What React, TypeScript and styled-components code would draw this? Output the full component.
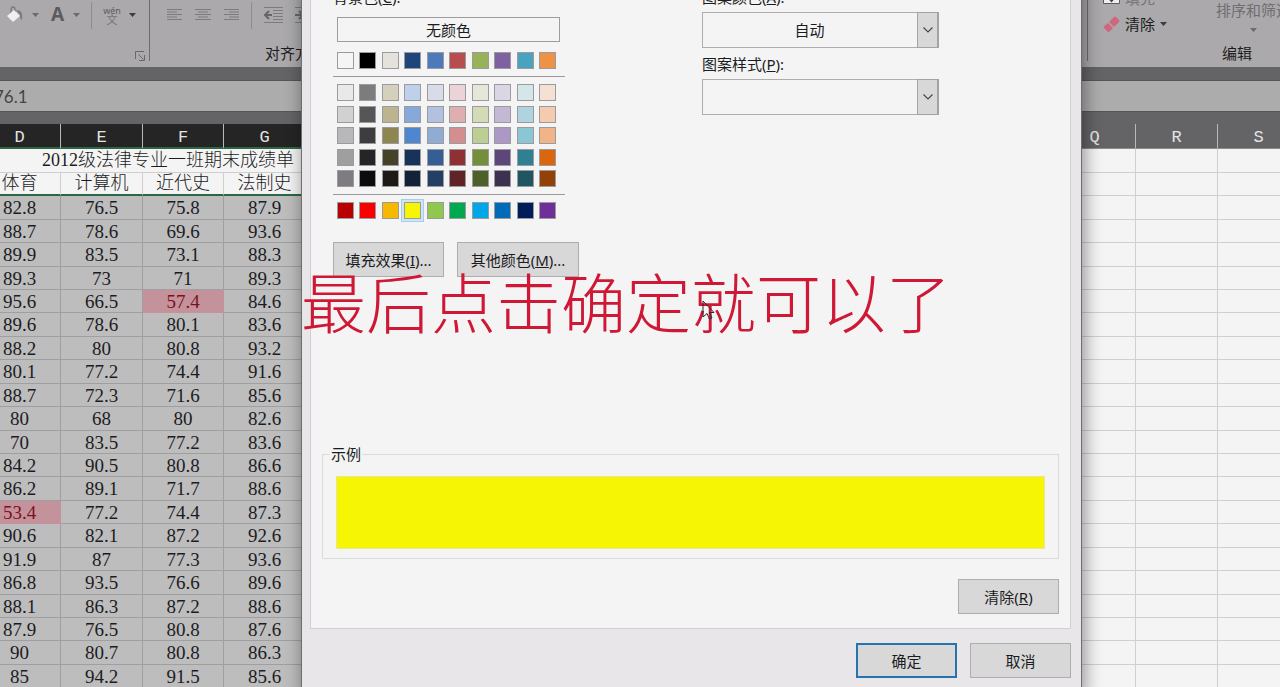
import React from "react";
import styled, { createGlobalStyle, css } from "styled-components";

const GlobalStyle = createGlobalStyle`
  * { box-sizing: border-box; }
  html, body { margin: 0; height: 100%; overflow: hidden; }
  body {
    background: #f4f4f4;
    color: #1c1c1e;
    font: 15px/20px "Noto Sans", "Noto Sans CJK SC", sans-serif;
  }
  button, select, input { font: inherit; color: inherit; margin: 0; }
`;

const Window = styled.main`
  position: relative;
  height: 100vh;
  overflow: hidden;
`;

/* Ribbon */
const Ribbon = styled.header`
  display: flex;
  height: 67px;
  background: #aba9ab;
`;
const RibbonGroup = styled.section<{ $width?: number; $edge?: "left" | "right" }>`
  display: flex;
  flex-direction: column;
  justify-content: space-between;
  flex: none;
  height: 61px;
  width: ${(p) => (p.$width ? `${p.$width}px` : "auto")};
  ${(p) => p.$edge && css`border-${p.$edge}: 1px solid #6d6c6e;`}
`;
const ToolRow = styled.div<{ $start: number; $gap: number }>`
  display: flex;
  align-items: center;
  height: 30px;
  padding-left: ${(p) => p.$start}px;
  gap: ${(p) => p.$gap}px;
`;
const ToolButton = styled.button`
  display: flex;
  align-items: center;
  flex: none;
  padding: 0;
  border: 0;
  background: none;
  gap: 8px;
  color: #5c5b5d;
  white-space: nowrap;
`;
const FontLetter = styled.span`
  width: 15px;
  padding-bottom: 3px;
  font: bold 19px/20px "Noto Sans", sans-serif;
`;
const Phonetic = styled.span`
  display: flex;
  flex-direction: column;
  align-items: center;
  width: 18px;
  font-size: 9px;
  line-height: 9px;
`;
const PhoneticBase = styled.span`
  font-size: 11px;
  line-height: 10px;
  color: #747375;
`;
const Divider = styled.span`
  width: 1px;
  height: 27px;
  background: #8d8c8e;
`;
const Launcher = styled(ToolButton)`
  align-self: flex-end;
  margin-right: 4px;
`;
const GroupLabel = styled.span<{ $start: number }>`
  padding-left: ${(p) => p.$start}px;
  line-height: 16px;
  white-space: nowrap;
`;
const Spacer = styled.div`
  flex: 1;
`;
const EditArea = styled.div`
  display: flex;
  justify-content: space-between;
  margin-right: -11px;
`;
const EditTools = styled.div`
  display: flex;
  flex-direction: column;
  gap: 6px;
  margin-top: -12px;
  padding-left: 15px;
`;
const EditButton = styled(ToolButton)<{ $dim?: boolean }>`
  color: ${(p) => (p.$dim ? "#777678" : "#1c1c1e")};
  gap: 5px;
  height: 20px;
`;
const SortButton = styled(ToolButton)`
  flex-direction: column;
  color: #6f6e70;
`;

/* Formula bar */
const FormulaRow = styled.div`
  padding: 13px 0 12px;
  background: #646366;
`;
const FormulaInput = styled.input`
  display: block;
  width: calc(100% + 6px);
  height: 32px;
  margin-left: -6px;
  padding: 0;
  border: solid #555457;
  border-width: 1px 0;
  background: #adacad;
  color: #454446;
  font: 17px/20px Lato, sans-serif;
`;

/* Sheet */
const Sheet = styled.table`
  width: calc(100% + 41px);
  margin-left: -21px;
  table-layout: fixed;
  border-collapse: separate;
  border-spacing: 0;
  font: 300 18px/20px "Liberation Serif", "Noto Sans CJK SC", serif;
`;
const Col = styled.col<{ $width?: number }>`
  width: ${(p) => (p.$width ? `${p.$width}px` : "auto")};
`;
const Letter = styled.th<{ $active?: boolean }>`
  height: 25px;
  padding: 4px 0 0;
  border-right: 1px solid #b9b8ba;
  border-bottom: ${(p) => (p.$active ? "2px solid #2c6645" : "1px solid #8b8a8c")};
  background: ${(p) => (p.$active ? "#252526" : "#646366")};
  color: #e4e3e5;
  font: 17px/18px "Liberation Mono", monospace;
`;
const Row = styled.tr`
  height: 23px;
  &:nth-child(7n + 1),
  &:nth-child(7n + 3),
  &:nth-child(7n + 5) {
    height: 24px;
  }
`;
const Cell = styled.td<{ $kind?: "head" | "score" | "low" }>`
  padding: 0;
  line-height: 21px;
  text-align: center;
  white-space: nowrap;
  border: solid #cfcfd0;
  border-width: 0 1px 1px 0;
  ${(p) => p.$kind === "head" && css`border-bottom: 2px solid #2c6645;`}
  ${(p) => (p.$kind === "score" || p.$kind === "low") && css`font-size: 19px;`}
  ${(p) => p.$kind === "score" && css`background: #bebdbe; border-color: #9f9ea0;`}
  ${(p) => p.$kind === "low" && css`background: #c4929a; border-color: #c4929a; color: #7d1020;`}
`;
const TitleCell = styled(Cell)`
  text-align: right;
  padding-right: 11px;
`;

/* Dialog */
const Dialog = styled.section`
  position: absolute;
  top: -14px;
  bottom: -8px;
  left: 302px;
  right: 199px;
  padding: 0 10px 0 8px;
  background: #e8e6e9;
  box-shadow: 0 0 0 1px #6e6d70, 2px 0 16px 2px rgba(0, 0, 0, 0.4);
`;
const Panel = styled.div`
  height: 643px;
  padding: 0 11px 14px;
  display: flex;
  flex-direction: column;
  border: 1px solid #d2d0d4;
  background: #f4f4f4;
`;
const Columns = styled.div`
  display: flex;
  justify-content: space-between;
`;
const ColorColumn = styled.div`
  padding-left: 11px;
`;
const PatternColumn = styled.div`
  width: 237px;
  margin-right: 120px;
`;
const Label = styled.label`
  display: block;
  line-height: 20px;
`;
const ColorLabel = styled.span`
  display: block;
  line-height: 20px;
`;
const NoColor = styled.button`
  display: block;
  width: 223px;
  height: 25px;
  margin: 10px 4px;
  padding: 0;
  border: 1px solid #9d9ca0;
  background: #f4f4f4;
  line-height: 20px;
`;
const Swatches = styled.div<{ $rows: number }>`
  display: grid;
  grid-template-columns: repeat(10, 17px);
  justify-content: space-between;
  align-content: space-between;
  width: 219px;
  height: ${(p) => (p.$rows > 1 ? 103 : 17)}px;
  margin-left: 4px;
`;
const Swatch = styled.button<{ $color: string; $selected?: boolean }>`
  width: 17px;
  height: 17px;
  padding: 0;
  border: 1px solid #9b9a9c;
  background: ${(p) => p.$color};
  ${(p) => p.$selected && css`box-shadow: 0 0 0 2px #cfe4f5, 0 0 0 3px #a5cdec;`}
`;
const Rule = styled.hr`
  width: 232px;
  height: 1px;
  margin: 7px 0;
  border: 0;
  background: #9b999d;
`;
const PushButton = styled.button<{ $width: number; $primary?: boolean }>`
  flex: none;
  width: ${(p) => p.$width}px;
  height: 35px;
  padding: 0;
  border: ${(p) => (p.$primary ? "2px solid #2673ae" : "1px solid #adacae")};
  background: #d9d8d9;
  white-space: nowrap;
`;
const FillButtons = styled.div`
  display: flex;
  gap: 13px;
  margin-top: 23px;
`;
const Combo = styled.div`
  position: relative;
  height: 36px;
  margin: 5px 0 6px;
`;
const Select = styled.select`
  width: 100%;
  height: 100%;
  padding: 0 22px 0 0;
  border: 1px solid #adacae;
  border-radius: 0;
  background: #f4f4f4;
  appearance: none;
  text-align: center;
  text-align-last: center;
`;
const ComboArrow = styled.span`
  position: absolute;
  top: 0;
  right: 0;
  bottom: 0;
  display: flex;
  align-items: center;
  justify-content: center;
  width: 22px;
  border: 1px solid #a3a2a4;
  border-right-width: 2px;
  background: #d9d8d9;
  pointer-events: none;
`;
const Sample = styled.fieldset`
  height: 115px;
  margin: auto 0 20px;
  padding: 12px 13px 10px;
  border: 1px solid #dad9db;
`;
const Legend = styled.legend`
  margin-left: -6px;
  padding: 0 1px;
  line-height: 20px;
`;
const SampleFill = styled.div`
  height: 73px;
  background: #f6f504;
  border: 1px solid #e9e890;
`;
const Actions = styled.div<{ $top?: number }>`
  display: flex;
  justify-content: flex-end;
  gap: 13px;
  margin-top: ${(p) => p.$top || 0}px;
`;

/* Overlays */
const Caption = styled.p`
  position: absolute;
  top: 262px;
  left: 301px;
  margin: 0;
  color: #cf1835;
  font: 300 65px/76px "Noto Sans CJK SC", sans-serif;
  white-space: nowrap;
  pointer-events: none;
`;
const Pointer = styled.svg`
  position: absolute;
  top: 300px;
  left: 702px;
`;

const Caret = ({ dark }: { dark?: boolean }) => (
  <svg width="7" height="4" viewBox="0 0 7 4" aria-hidden="true">
    <path d="M0 0h7L3.500 4z" fill={dark ? "#3c3b3d" : "#6b6a6c"} />
  </svg>
);
const Bucket = () => (
  <svg width="18" height="18" viewBox="0 0 18 18" aria-hidden="true">
    <path d="M5 8V4c0-4 4-4 4 0v4" fill="none" stroke="#7b7a7c" strokeWidth="1.300" />
    <path d="M10 4c5 0 7 3 6 10-2-1-2-3-2-5z" fill="#7b7a7c" />
    <path d="M1 10 8 4l6 6-7 6z" fill="#f0eff0" />
  </svg>
);
const Lines = ({ rows }: { rows: [number, number][] }) => (
  <svg width="16" height="12" viewBox="0 0 16 12" aria-hidden="true">
    {rows.map(([x, w], i) => (
      <rect key={i} x={x} y={i * 2.5} width={w} height="1" fill="#7c7b7d" />
    ))}
  </svg>
);
const Indent = ({ right }: { right?: boolean }) => (
  <svg width="19" height="18" viewBox="0 0 19 18" aria-hidden="true">
    <path d="M0 1.500h19M9 4.500h10M9 7.500h10M9 10.500h10M9 13.500h10M0 16.500h19" stroke="#7c7b7d" />
    <path
      d={right ? "M0 9h7M4 5l4 4-4 4" : "M8 9H1M5 5 1 9l4 4"}
      fill="none"
      stroke="#666567"
      strokeWidth="2"
    />
  </svg>
);
const Eraser = () => (
  <svg width="17" height="17" viewBox="0 0 17 17" aria-hidden="true">
    <path d="M6 6 11 1q1-1 2 0l3 3q1 1 0 2l-5 5z" fill="#cf667f" />
    <path d="M5 7l5 5-3.500 3.500q-1 1-2 0L1 12q-1-1 0-2z" fill="#cf667f" />
  </svg>
);
const FillIcon = () => (
  <svg width="17" height="17" viewBox="0 0 17 17" aria-hidden="true">
    <path d="M.5.5h16v13H.5z" fill="#f0eff0" stroke="#5c5b5d" />
    <path d="M8.500 3v7M5 7l3.500 4L12 7" fill="none" stroke="#444" strokeWidth="2" />
  </svg>
);
const Chevron = () => (
  <svg width="10" height="6" viewBox="0 0 10 6" aria-hidden="true">
    <path d="M.5.500 5 5 9.500.500" fill="none" stroke="#4a494b" strokeWidth="1.200" />
  </svg>
);

const alignments: { name: string; rows: [number, number][] }[] = [
  { name: "左对齐", rows: [[0, 15], [0, 10], [0, 15], [0, 10], [0, 15]] },
  { name: "居中", rows: [[0, 16], [3, 10], [0, 16], [3, 10], [0, 16]] },
  { name: "右对齐", rows: [[1, 15], [6, 10], [1, 15], [6, 10], [1, 15]] },
];

const scores = [
  ["82.8", "76.5", "75.8", "87.9"],
  ["88.7", "78.6", "69.6", "93.6"],
  ["89.9", "83.5", "73.1", "88.3"],
  ["89.3", "73", "71", "89.3"],
  ["95.6", "66.5", "57.4", "84.6"],
  ["89.6", "78.6", "80.1", "83.6"],
  ["88.2", "80", "80.8", "93.2"],
  ["80.1", "77.2", "74.4", "91.6"],
  ["88.7", "72.3", "71.6", "85.6"],
  ["80", "68", "80", "82.6"],
  ["70", "83.5", "77.2", "83.6"],
  ["84.2", "90.5", "80.8", "86.6"],
  ["86.2", "89.1", "71.7", "88.6"],
  ["53.4", "77.2", "74.4", "87.3"],
  ["90.6", "82.1", "87.2", "92.6"],
  ["91.9", "87", "77.3", "93.6"],
  ["86.8", "93.5", "76.6", "89.6"],
  ["88.1", "86.3", "87.2", "88.6"],
  ["87.9", "76.5", "80.8", "87.6"],
  ["90", "80.7", "80.8", "86.3"],
  ["85", "94.2", "91.5", "85.6"],
];

const themeColors = ["#f5f5f5", "#000000", "#e5e2db", "#1f467b", "#4f7ab9", "#b94c4e", "#98b257", "#7f60a0", "#49a3bf", "#ee9346"];
const tints = [
  "#e9e9ea", "#7c7c7d", "#d5d0bc", "#bfd0eb", "#d8dce9", "#ebd3d7", "#e5e8d8", "#dad6e5", "#d5e6ea", "#f5e1d3",
  "#d1d1d2", "#565658", "#bdb38f", "#86a9dc", "#b2c1df", "#dfaeb1", "#d2dbb6", "#c4b8d5", "#b0d4df", "#f4cbac",
  "#b8b7ba", "#3d3c3f", "#8f8550", "#4e86d0", "#91acd2", "#d38f90", "#bdce94", "#ab98c5", "#8cc5d3", "#f0b486",
  "#9f9f9f", "#262427", "#464229", "#17335a", "#345e94", "#8f3134", "#738f39", "#5d4679", "#2f8095", "#da670e",
  "#7e7c80", "#0c0b0d", "#1e1b16", "#112239", "#243e64", "#612426", "#4e602a", "#3e304f", "#205661", "#924107",
];
const standardColors = ["#b80000", "#f80000", "#f6b800", "#f6f504", "#90c84f", "#00a94f", "#00a7e8", "#006bb9", "#001d5b", "#6e2f99"];

const EmptyCells = () => (
  <>
    <Cell />
    <Cell />
    <Cell />
    <Cell />
  </>
);

export default function App() {
  return (
    <Window>
      <GlobalStyle />
      <Ribbon>
        <RibbonGroup $width={150} $edge="right">
          <ToolRow $start={6} $gap={11}>
            <ToolButton aria-label="填充颜色"><Bucket /><Caret /></ToolButton>
            <ToolButton aria-label="字体颜色"><FontLetter>A</FontLetter><Caret /></ToolButton>
            <Divider />
            <ToolButton aria-label="拼音指南">
              <Phonetic><span>wén</span><PhoneticBase>文</PhoneticBase></Phonetic>
              <Caret dark />
            </ToolButton>
          </ToolRow>
          <Launcher aria-label="字体设置">
            <svg width="10" height="10" viewBox="0 0 10 10">
              <path d="M.5 8V.5H9M3.500 3.500l5 5M9.500 4v5.500H4" fill="none" stroke="#69686a" />
            </svg>
          </Launcher>
        </RibbonGroup>
        <RibbonGroup $width={170}>
          <ToolRow $start={17} $gap={12}>
            {alignments.map((a) => (
              <ToolButton key={a.name} aria-label={a.name}><Lines rows={a.rows} /></ToolButton>
            ))}
            <Divider />
            <ToolButton aria-label="减少缩进"><Indent /></ToolButton>
            <ToolButton aria-label="增加缩进"><Indent right /></ToolButton>
          </ToolRow>
          <GroupLabel $start={115}>对齐方式</GroupLabel>
        </RibbonGroup>
        <Spacer />
        <RibbonGroup $width={193} $edge="left">
          <EditArea>
            <EditTools>
              <EditButton $dim><FillIcon />填充</EditButton>
              <EditButton><Eraser />清除<Caret dark /></EditButton>
            </EditTools>
            <SortButton>排序和筛选<Caret /></SortButton>
          </EditArea>
          <GroupLabel $start={134}>编辑</GroupLabel>
        </RibbonGroup>
      </Ribbon>
      <FormulaRow>
        <FormulaInput aria-label="编辑栏" defaultValue="76.1" />
      </FormulaRow>
      <Sheet>
        <colgroup>
          <Col $width={82} /><Col $width={82} /><Col $width={81} /><Col $width={82} />
          <Col />
          <Col $width={82} /><Col $width={82} /><Col $width={82} />
        </colgroup>
        <thead>
          <tr>
            {["D", "E", "F", "G"].map((l) => <Letter key={l} $active>{l}</Letter>)}
            <Letter />
            {["Q", "R", "S"].map((l) => <Letter key={l}>{l}</Letter>)}
          </tr>
        </thead>
        <tbody>
          <Row>
            <TitleCell colSpan={4}>2012级法律专业一班期末成绩单</TitleCell>
            <EmptyCells />
          </Row>
          <Row>
            {["体育", "计算机", "近代史", "法制史"].map((n) => <Cell key={n} $kind="head">{n}</Cell>)}
            <EmptyCells />
          </Row>
          {scores.map((row, i) => (
            <Row key={i}>
              {row.map((s, j) => <Cell key={j} $kind={Number(s) < 60 ? "low" : "score"}>{s}</Cell>)}
              <EmptyCells />
            </Row>
          ))}
        </tbody>
      </Sheet>

      <Dialog role="dialog" aria-label="设置单元格格式">
        <Panel>
          <Columns>
            <ColorColumn>
              <ColorLabel>背景色(<u>C</u>):</ColorLabel>
              <NoColor>无颜色</NoColor>
              <Swatches $rows={1}>
                {themeColors.map((c) => <Swatch key={c} $color={c} aria-label={c} />)}
              </Swatches>
              <Rule />
              <Swatches $rows={5}>
                {tints.map((c) => <Swatch key={c} $color={c} aria-label={c} />)}
              </Swatches>
              <Rule />
              <Swatches $rows={1}>
                {standardColors.map((c, i) => <Swatch key={c} $color={c} $selected={i === 3} aria-label={c} />)}
              </Swatches>
              <FillButtons>
                <PushButton $width={111}>填充效果(<u>I</u>)...</PushButton>
                <PushButton $width={122}>其他颜色(<u>M</u>)...</PushButton>
              </FillButtons>
            </ColorColumn>
            <PatternColumn>
              <Label htmlFor="pattern-color">图案颜色(<u>A</u>):</Label>
              <Combo>
                <Select id="pattern-color"><option>自动</option></Select>
                <ComboArrow><Chevron /></ComboArrow>
              </Combo>
              <Label htmlFor="pattern-style">图案样式(<u>P</u>):</Label>
              <Combo>
                <Select id="pattern-style"><option></option></Select>
                <ComboArrow><Chevron /></ComboArrow>
              </Combo>
            </PatternColumn>
          </Columns>
          <Sample>
            <Legend>示例</Legend>
            <SampleFill />
          </Sample>
          <Actions>
            <PushButton $width={101}>清除(<u>R</u>)</PushButton>
          </Actions>
        </Panel>
        <Actions $top={14}>
          <PushButton $width={101} $primary>确定</PushButton>
          <PushButton $width={101}>取消</PushButton>
        </Actions>
      </Dialog>

      <Caption>最后点击确定就可以了</Caption>
      <Pointer width="14" height="21" viewBox="0 0 14 21" aria-hidden="true">
        <path d="M1 1v16l4-3.500L7.500 19l2.500-1-2.500-5.500H12z" fill="none" stroke="#2a2a2c" />
      </Pointer>
    </Window>
  );
}
